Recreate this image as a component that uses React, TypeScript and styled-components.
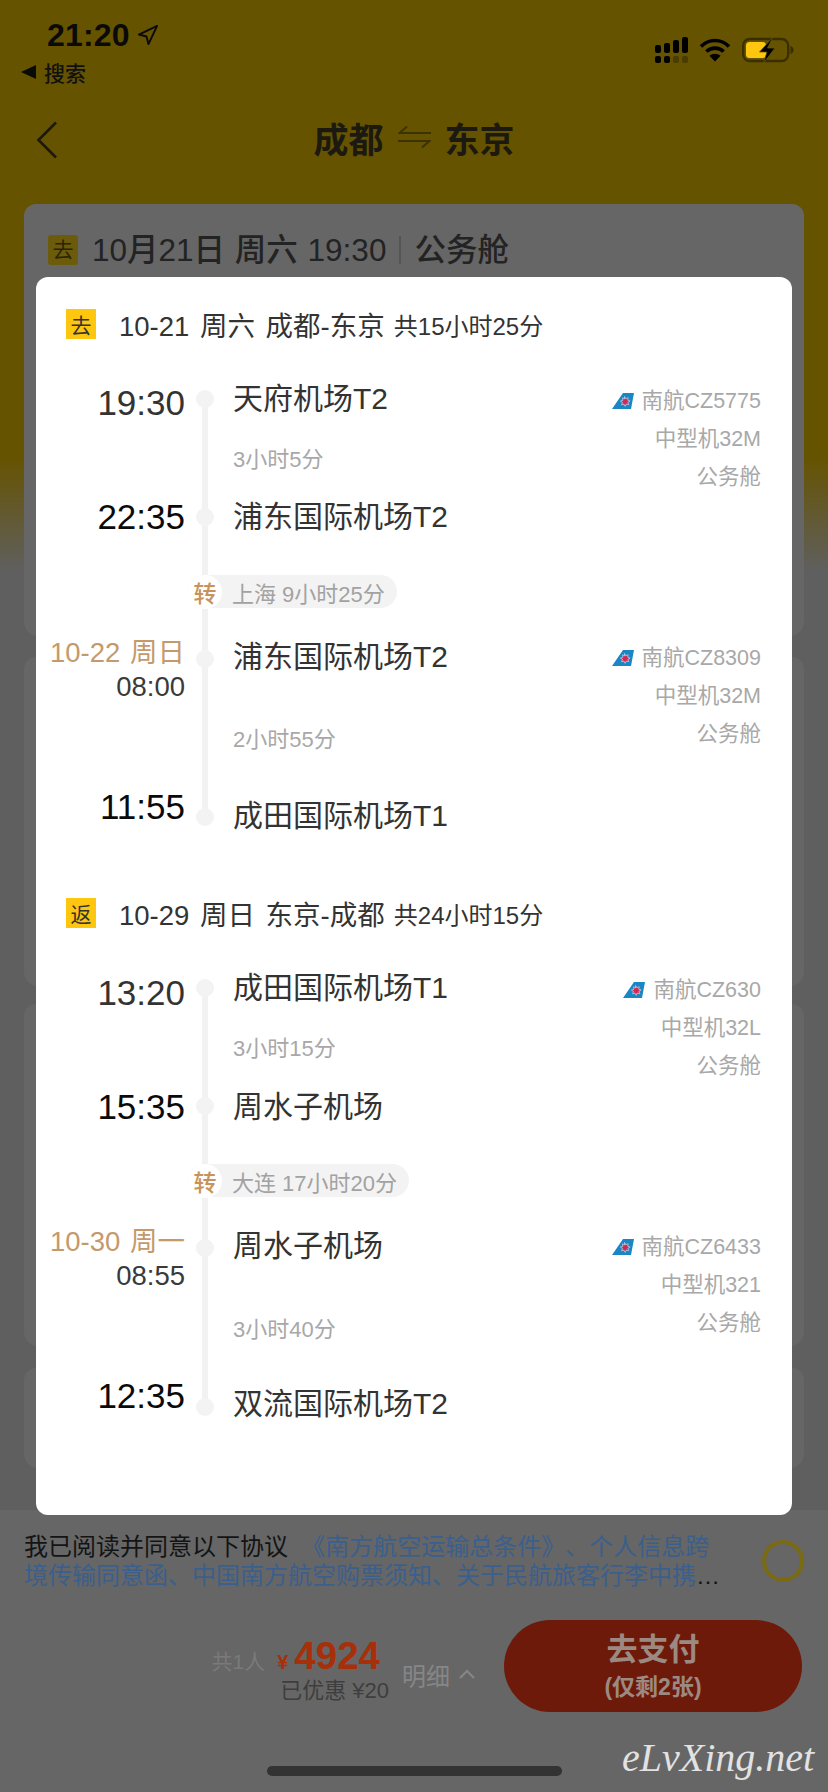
import React from "react";
import styled, { createGlobalStyle } from "styled-components";
import { Navigation } from "lucide-react";

const GlobalStyle = createGlobalStyle`
  html, body {
    margin: 0;
    padding: 0;
    width: 828px;
    height: 1792px;
    overflow: hidden;
    background: #5f5f5f;
    font-family: "Liberation Sans", "Noto Sans CJK SC", sans-serif;
    text-spacing-trim: space-all;
  }
`;

const Page = styled.div`
  position: relative;
  display: flex;
  flex-direction: column;
  width: 828px;
  height: 1792px;
  overflow: hidden;
  background: linear-gradient(#665300 0, #665300 457px, #5f5f5f 571px);
`;

/* status bar */
const StatusBar = styled.div`
  display: flex;
  justify-content: space-between;
  height: 100px;
  padding: 17px 34px 0 21px;
  box-sizing: border-box;
`;
const StatusLeft = styled.div`
  display: flex;
  flex-direction: column;
`;
const ClockRow = styled.div`
  display: flex;
  align-items: center;
  gap: 6px;
  height: 36px;
  padding-left: 26px;
  color: #0a0a0a;
  font-size: 32px;
  font-weight: 700;
  letter-spacing: 0.2px;
`;
const BackToApp = styled.div`
  display: flex;
  align-items: center;
  gap: 8px;
  height: 30px;
  margin-top: 4px;
  color: #111;
  font-size: 21px;
  font-weight: 500;
`;
const BackTriangle = styled.span`
  width: 0;
  height: 0;
  border-style: solid;
  border-width: 7px 15px 7px 0;
  border-color: transparent #0a0a0a transparent transparent;
`;
const StatusIcons = styled.div`
  display: flex;
  align-items: flex-start;
  gap: 11px;
  padding-top: 20px;
`;

/* nav bar */
const NavBar = styled.div`
  position: relative;
  display: flex;
  align-items: center;
  justify-content: center;
  gap: 14px;
  height: 80px;
  padding-bottom: 6px;
  box-sizing: border-box;
  color: #1c1a10;
  font-size: 35px;
  font-weight: 700;
`;
const NavBack = styled.svg`
  position: absolute;
  left: 36px;
  top: 21px;
`;

/* cards behind the sheet */
const CardList = styled.div`
  display: flex;
  flex-direction: column;
  margin-top: 24px;
  padding: 0 24px;
`;
const Card = styled.div<{ $height: number; $gap: number }>`
  height: ${(p) => p.$height}px;
  margin-bottom: ${(p) => p.$gap}px;
  background: #666;
  border-radius: 12px 12px 14px 14px;
`;
const CardHead = styled.div`
  display: flex;
  align-items: center;
  height: 30px;
  padding: 31px 0 0 24px;
  color: #232323;
  font-size: 31.5px;
  line-height: 30px;
  font-weight: 500;
  word-spacing: 1px;
`;
const CardTag = styled.span`
  display: flex;
  align-items: center;
  justify-content: center;
  width: 30px;
  height: 30px;
  margin-right: 14px;
  border-radius: 3px;
  background: #6d5b0c;
  color: #2a2500;
  font-size: 21px;
  font-weight: 400;
`;
const CardDivider = styled.span`
  width: 2px;
  height: 28px;
  margin: 0 13px;
  background: #555;
`;

/* footer */
const Footer = styled.div`
  display: flex;
  flex-direction: column;
  margin-top: auto;
  height: 282px;
  background: #666;
`;
const Terms = styled.div`
  display: flex;
  align-items: flex-start;
  justify-content: space-between;
  padding: 22px 24px 0;
  height: 110px;
  box-sizing: border-box;
`;
const TermsText = styled.div`
  display: -webkit-box;
  -webkit-box-orient: vertical;
  -webkit-line-clamp: 2;
  overflow: hidden;
  width: 698px;
  color: #141414;
  font-size: 24px;
  line-height: 29px;
  word-break: break-all;
`;
const TermsLink = styled.span`
  color: #3b5f8c;
`;
const TermsCheck = styled.span`
  width: 42px;
  height: 42px;
  margin-top: 8px;
  box-sizing: border-box;
  border: 4px solid #7a6a12;
  border-radius: 50%;
`;
const BuyBar = styled.div`
  display: flex;
  align-items: flex-start;
  justify-content: flex-end;
  padding-right: 26px;
`;
const Summary = styled.div`
  display: flex;
  flex-direction: column;
  align-items: flex-end;
  margin-top: 14px;
`;
const PriceLine = styled.div`
  display: flex;
  align-items: baseline;
  height: 44px;
  line-height: 44px;
  padding-right: 9px;
`;
const PeopleCount = styled.span`
  margin-right: 12px;
  color: #7a7a7a;
  font-size: 21px;
`;
const Currency = styled.span`
  margin-right: 6px;
  color: #a5300a;
  font-size: 20px;
  font-weight: 700;
`;
const Amount = styled.span`
  color: #a5300a;
  font-size: 38.5px;
  font-weight: 700;
`;
const Discount = styled.div`
  color: #3e3e3e;
  font-size: 22px;
  line-height: 26px;
`;
const DetailToggle = styled.div`
  display: flex;
  align-items: center;
  gap: 9px;
  height: 34px;
  margin: 37px 29px 0 13px;
  color: #868686;
  font-size: 24px;
`;
const PayButton = styled.button`
  display: flex;
  flex-direction: column;
  align-items: center;
  justify-content: center;
  width: 298px;
  height: 92px;
  padding: 0;
  border: none;
  border-radius: 46px;
  background: #6e1a0a;
  color: #9c8a82;
  font-family: inherit;
  font-weight: 700;
`;
const PayTitle = styled.span`
  font-size: 31px;
  line-height: 42px;
`;
const PayNote = styled.span`
  font-size: 23px;
  line-height: 32px;
`;
const HomeBar = styled.div`
  align-self: center;
  width: 295px;
  height: 10px;
  margin-top: 54px;
  border-radius: 5px;
  background: #333;
`;
const Watermark = styled.div`
  position: absolute;
  left: 622px;
  top: 1734px;
  color: #e2e2e2;
  font-family: "Liberation Serif", serif;
  font-style: italic;
  font-size: 40px;
  line-height: 48px;
  white-space: nowrap;
`;

/* sheet */
const Sheet = styled.div`
  position: absolute;
  left: 36px;
  top: 277px;
  display: flex;
  flex-direction: column;
  gap: 61px;
  width: 756px;
  height: 1238px;
  padding: 32px 31px 0 0;
  box-sizing: border-box;
  background: #fff;
  border-radius: 12px;
`;
const LegBlock = styled.section`
  display: flex;
  flex-direction: column;
  gap: 40px;
`;
const LegHead = styled.div`
  display: flex;
  align-items: center;
  height: 30px;
  padding-left: 30px;
  color: #333;
  font-size: 27.5px;
  word-spacing: 3px;
`;
const LegTag = styled.span`
  display: flex;
  align-items: center;
  justify-content: center;
  width: 30px;
  height: 30px;
  margin-right: 23px;
  background: #ffc60f;
  color: #333;
  font-size: 21px;
`;
const LegTotal = styled.span`
  margin-left: 9px;
  font-size: 24px;
`;
const Timeline = styled.div`
  position: relative;
  display: flex;
  flex-direction: column;
  &::before {
    content: "";
    position: absolute;
    left: 166px;
    top: 20px;
    bottom: 20px;
    width: 6px;
    background: #f2f2f2;
  }
`;
const FlightGrid = styled.div<{ $height: number }>`
  display: grid;
  grid-template-columns: 151px 36px 1fr auto;
  grid-template-rows: 40px 1fr 40px;
  height: ${(p) => p.$height}px;
`;
const TimeCell = styled.div`
  display: flex;
  flex-direction: column;
  align-items: flex-end;
  padding-right: 2px;
`;
const Clock = styled.div<{ $nudge: number }>`
  margin-top: ${(p) => p.$nudge}px;
  color: ${(p) => (p.$nudge > 2 ? "#333" : "#0a0a0a")};
  font-size: 35px;
  line-height: 40px;
`;
const NextDay = styled.div`
  margin-top: -3px;
  color: #c49a6c;
  font-size: 27.5px;
  word-spacing: 2px;
  line-height: 34px;
  white-space: nowrap;
`;
const NextDayClock = styled.div`
  color: #3a3a3a;
  font-size: 27.5px;
  line-height: 34px;
`;
const DotCell = styled.div`
  position: relative;
  display: flex;
  align-items: center;
  justify-content: center;
`;
const Dot = styled.span`
  width: 18px;
  height: 18px;
  border-radius: 50%;
  background: #f3f3f3;
`;
const Airport = styled.div<{ $nudge: number }>`
  margin-top: ${(p) => p.$nudge}px;
  padding-left: 10px;
  color: #333;
  font-size: 30px;
  line-height: 40px;
  white-space: nowrap;
`;
const Duration = styled.div`
  grid-column: 3;
  align-self: center;
  margin-top: 4px;
  padding-left: 10px;
  color: #a8a8a8;
  font-size: 22px;
  line-height: 30px;
`;
const FlightInfo = styled.div<{ $offset: number }>`
  grid-column: 4;
  grid-row: 1 / span 3;
  display: flex;
  flex-direction: column;
  align-items: flex-end;
  padding-top: ${(p) => p.$offset}px;
  color: #a8a8a8;
  font-size: 21.5px;
  line-height: 38px;
`;
const AirlineRow = styled.div`
  display: flex;
  align-items: center;
  gap: 8px;
`;
const TransferPill = styled.div`
  position: relative;
  align-self: flex-start;
  display: flex;
  align-items: center;
  gap: 10px;
  height: 33px;
  margin: 38px 0 31px 152px;
  padding-right: 12px;
  border-radius: 17px;
  background: #f3f3f3;
  color: #a2a2a2;
  font-size: 22px;
`;
const TransferBadge = styled.span`
  display: flex;
  align-items: center;
  justify-content: center;
  width: 34px;
  height: 34px;
  border-radius: 50%;
  background: #fff;
  color: #c8925a;
  font-size: 23px;
  font-weight: 500;
`;

const Stack = styled.div`
  display: contents;
`;

const SignalIcon = () => (
  <svg width="33" height="26" viewBox="0 0 33 26">
    <g fill="#000">
      <rect x="0" y="8" width="6" height="8" rx="2" />
      <rect x="9" y="6" width="6" height="10" rx="2" />
      <rect x="18" y="3" width="6" height="13" rx="2" />
      <rect x="27" y="0" width="6" height="16" rx="2" />
      <rect x="0" y="19" width="6" height="7" rx="2" />
      <rect x="9" y="19" width="6" height="7" rx="2" />
    </g>
    <g fill="#4a3d00">
      <rect x="18" y="19" width="6" height="7" rx="2" />
      <rect x="27" y="19" width="6" height="7" rx="2" />
    </g>
  </svg>
);

const WifiIcon = () => (
  <svg width="32" height="25" viewBox="0 0 32 25" fill="none" stroke="#000" strokeWidth="3.6">
    <path d="M2 9.5C9.8 1.5 22.2 1.5 30 9.5" />
    <path d="M7.4 14.6C12 10 20 10 24.6 14.6" />
    <path d="M16 24.5L10.4 18.7C13.4 16 18.6 16 21.6 18.7Z" fill="#000" stroke="none" />
  </svg>
);

const BatteryIcon = () => (
  <svg width="52" height="26" viewBox="0 0 52 26">
    <rect x="1.2" y="2" width="45" height="22" rx="6.5" fill="none" stroke="#3a2f00" strokeWidth="2.4" />
    <path d="M48.5 9v8c1.8-.5 3-2 3-4s-1.2-3.500-3-4z" fill="#3a2f00" />
    <rect x="4" y="5" width="20" height="16" rx="3.500" fill="#ffc60f" />
    <path d="M31 0L17.500 15h7.500L21.500 26 33 11h-7.500z" fill="#000" stroke="#665300" strokeWidth="0.8" />
  </svg>
);

const SwapIcon = () => (
  <svg width="33" height="24" viewBox="0 0 33 24" fill="none" stroke="#3b3208" strokeWidth="2">
    <path d="M33 8H1.500L9 1.500" />
    <path d="M0 16h31.500L24 22.500" />
  </svg>
);

const AirlineLogo = () => (
  <svg width="22" height="16" viewBox="0 0 22 16">
    <path d="M0 16L11 0H22L19 16Z" fill="#1b86c4" />
    <path d="M12.500 3.500l1.300 2.200 2.400-1-.5 2.500 2.400.8-2.200 1.300.8 2.400-2.500-.6-1 2.300-1.200-2.300-2.400.7.9-2.400-2.100-1.300 2.500-.8-.4-2.400 2.400 1z" fill="#cf2a55" stroke="#fff" strokeWidth="0.5" />
  </svg>
);

type Stop = {
  clock: string;
  clockNudge: number;
  airport: string;
  airportNudge: number;
  nextDay?: string;
};
type Flight = {
  height: number;
  infoOffset: number;
  from: Stop;
  to: Stop;
  duration: string;
  airline: string;
  plane: string;
};
type Leg = {
  tag: string;
  title: string;
  total: string;
  flights: [Flight, Flight];
  transfer: string;
};

const legs: Leg[] = [
  {
    tag: "去",
    title: "10-21 周六 成都-东京",
    total: "共15小时25分",
    transfer: "上海 9小时25分",
    flights: [
      {
        height: 158,
        infoOffset: 3,
        from: { clock: "19:30", clockNudge: 4, airport: "天府机场T2", airportNudge: 0 },
        to: { clock: "22:35", clockNudge: 0, airport: "浦东国际机场T2", airportNudge: 0 },
        duration: "3小时5分",
        airline: "南航CZ5775",
        plane: "中型机32M",
      },
      {
        height: 198,
        infoOffset: 0,
        from: { clock: "08:00", clockNudge: 0, airport: "浦东国际机场T2", airportNudge: -2, nextDay: "10-22 周日" },
        to: { clock: "11:55", clockNudge: -10, airport: "成田国际机场T1", airportNudge: -1 },
        duration: "2小时55分",
        airline: "南航CZ8309",
        plane: "中型机32M",
      },
    ],
  },
  {
    tag: "返",
    title: "10-29 周日 东京-成都",
    total: "共24小时15分",
    transfer: "大连 17小时20分",
    flights: [
      {
        height: 158,
        infoOffset: 3,
        from: { clock: "13:20", clockNudge: 5, airport: "成田国际机场T1", airportNudge: 0 },
        to: { clock: "15:35", clockNudge: 1, airport: "周水子机场", airportNudge: 1 },
        duration: "3小时15分",
        airline: "南航CZ630",
        plane: "中型机32L",
      },
      {
        height: 199,
        infoOffset: 0,
        from: { clock: "08:55", clockNudge: 0, airport: "周水子机场", airportNudge: -2, nextDay: "10-30 周一" },
        to: { clock: "12:35", clockNudge: -11, airport: "双流国际机场T2", airportNudge: -3 },
        duration: "3小时40分",
        airline: "南航CZ6433",
        plane: "中型机321",
      },
    ],
  },
];

const StopRow: React.FC<{ stop: Stop }> = ({ stop }) => (
  <Stack>
    <TimeCell>
      {stop.nextDay ? (
        <>
          <NextDay>{stop.nextDay}</NextDay>
          <NextDayClock>{stop.clock}</NextDayClock>
        </>
      ) : (
        <Clock $nudge={stop.clockNudge}>{stop.clock}</Clock>
      )}
    </TimeCell>
    <DotCell>
      <Dot />
    </DotCell>
    <Airport $nudge={stop.airportNudge}>{stop.airport}</Airport>
  </Stack>
);

const FlightBlock: React.FC<{ flight: Flight }> = ({ flight }) => (
  <FlightGrid $height={flight.height}>
    <StopRow stop={flight.from} />
    <FlightInfo $offset={flight.infoOffset}>
      <AirlineRow>
        <AirlineLogo />
        {flight.airline}
      </AirlineRow>
      <div>{flight.plane}</div>
      <div>公务舱</div>
    </FlightInfo>
    <Duration>{flight.duration}</Duration>
    <StopRow stop={flight.to} />
  </FlightGrid>
);

const App: React.FC = () => {
  return (
    <Page>
      <GlobalStyle />
      <StatusBar>
        <StatusLeft>
          <ClockRow>
            21:20
            <Navigation size={23} strokeWidth={2} color="#0a0a0a" />
          </ClockRow>
          <BackToApp>
            <BackTriangle />
            搜索
          </BackToApp>
        </StatusLeft>
        <StatusIcons>
          <SignalIcon />
          <WifiIcon />
          <BatteryIcon />
        </StatusIcons>
      </StatusBar>
      <NavBar>
        <NavBack width="22" height="38" viewBox="0 0 22 38" fill="none" stroke="#1c1a10" strokeWidth="2.6">
          <path d="M20 1.500L2.500 19 20 36.500" />
        </NavBack>
        成都
        <SwapIcon />
        东京
      </NavBar>
      <CardList>
        <Card $height={432} $gap={21}>
          <CardHead>
            <CardTag>去</CardTag>
            10月21日 周六 19:30
            <CardDivider />
            公务舱
          </CardHead>
        </Card>
        <Card $height={329} $gap={18} />
        <Card $height={342} $gap={22} />
        <Card $height={100} $gap={0} />
      </CardList>
      <Footer>
        <Terms>
          <TermsText>
            我已阅读并同意以下协议&nbsp;&nbsp;
            <TermsLink>《南方航空运输总条件》、个人信息跨境传输同意函、中国南方航空购票须知、关于民航旅客行李中携带锂电池及危险品的公告</TermsLink>
          </TermsText>
          <TermsCheck />
        </Terms>
        <BuyBar>
          <Summary>
            <PriceLine>
              <PeopleCount>共1人</PeopleCount>
              <Currency>¥</Currency>
              <Amount>4924</Amount>
            </PriceLine>
            <Discount>已优惠 ¥20</Discount>
          </Summary>
          <DetailToggle>
            明细
            <svg width="16" height="10" viewBox="0 0 16 10" fill="none" stroke="#868686" strokeWidth="2">
              <path d="M1 9L8 2l7 7" />
            </svg>
          </DetailToggle>
          <PayButton>
            <PayTitle>去支付</PayTitle>
            <PayNote>(仅剩2张)</PayNote>
          </PayButton>
        </BuyBar>
        <HomeBar />
      </Footer>
      <Sheet>
        {legs.map((leg) => (
          <LegBlock key={leg.tag}>
            <LegHead>
              <LegTag>{leg.tag}</LegTag>
              {leg.title}
              <LegTotal>{leg.total}</LegTotal>
            </LegHead>
            <Timeline>
              <FlightBlock flight={leg.flights[0]} />
              <TransferPill>
                <TransferBadge>转</TransferBadge>
                {leg.transfer}
              </TransferPill>
              <FlightBlock flight={leg.flights[1]} />
            </Timeline>
          </LegBlock>
        ))}
      </Sheet>
      <Watermark>eLvXing.net</Watermark>
    </Page>
  );
};

export default App;
